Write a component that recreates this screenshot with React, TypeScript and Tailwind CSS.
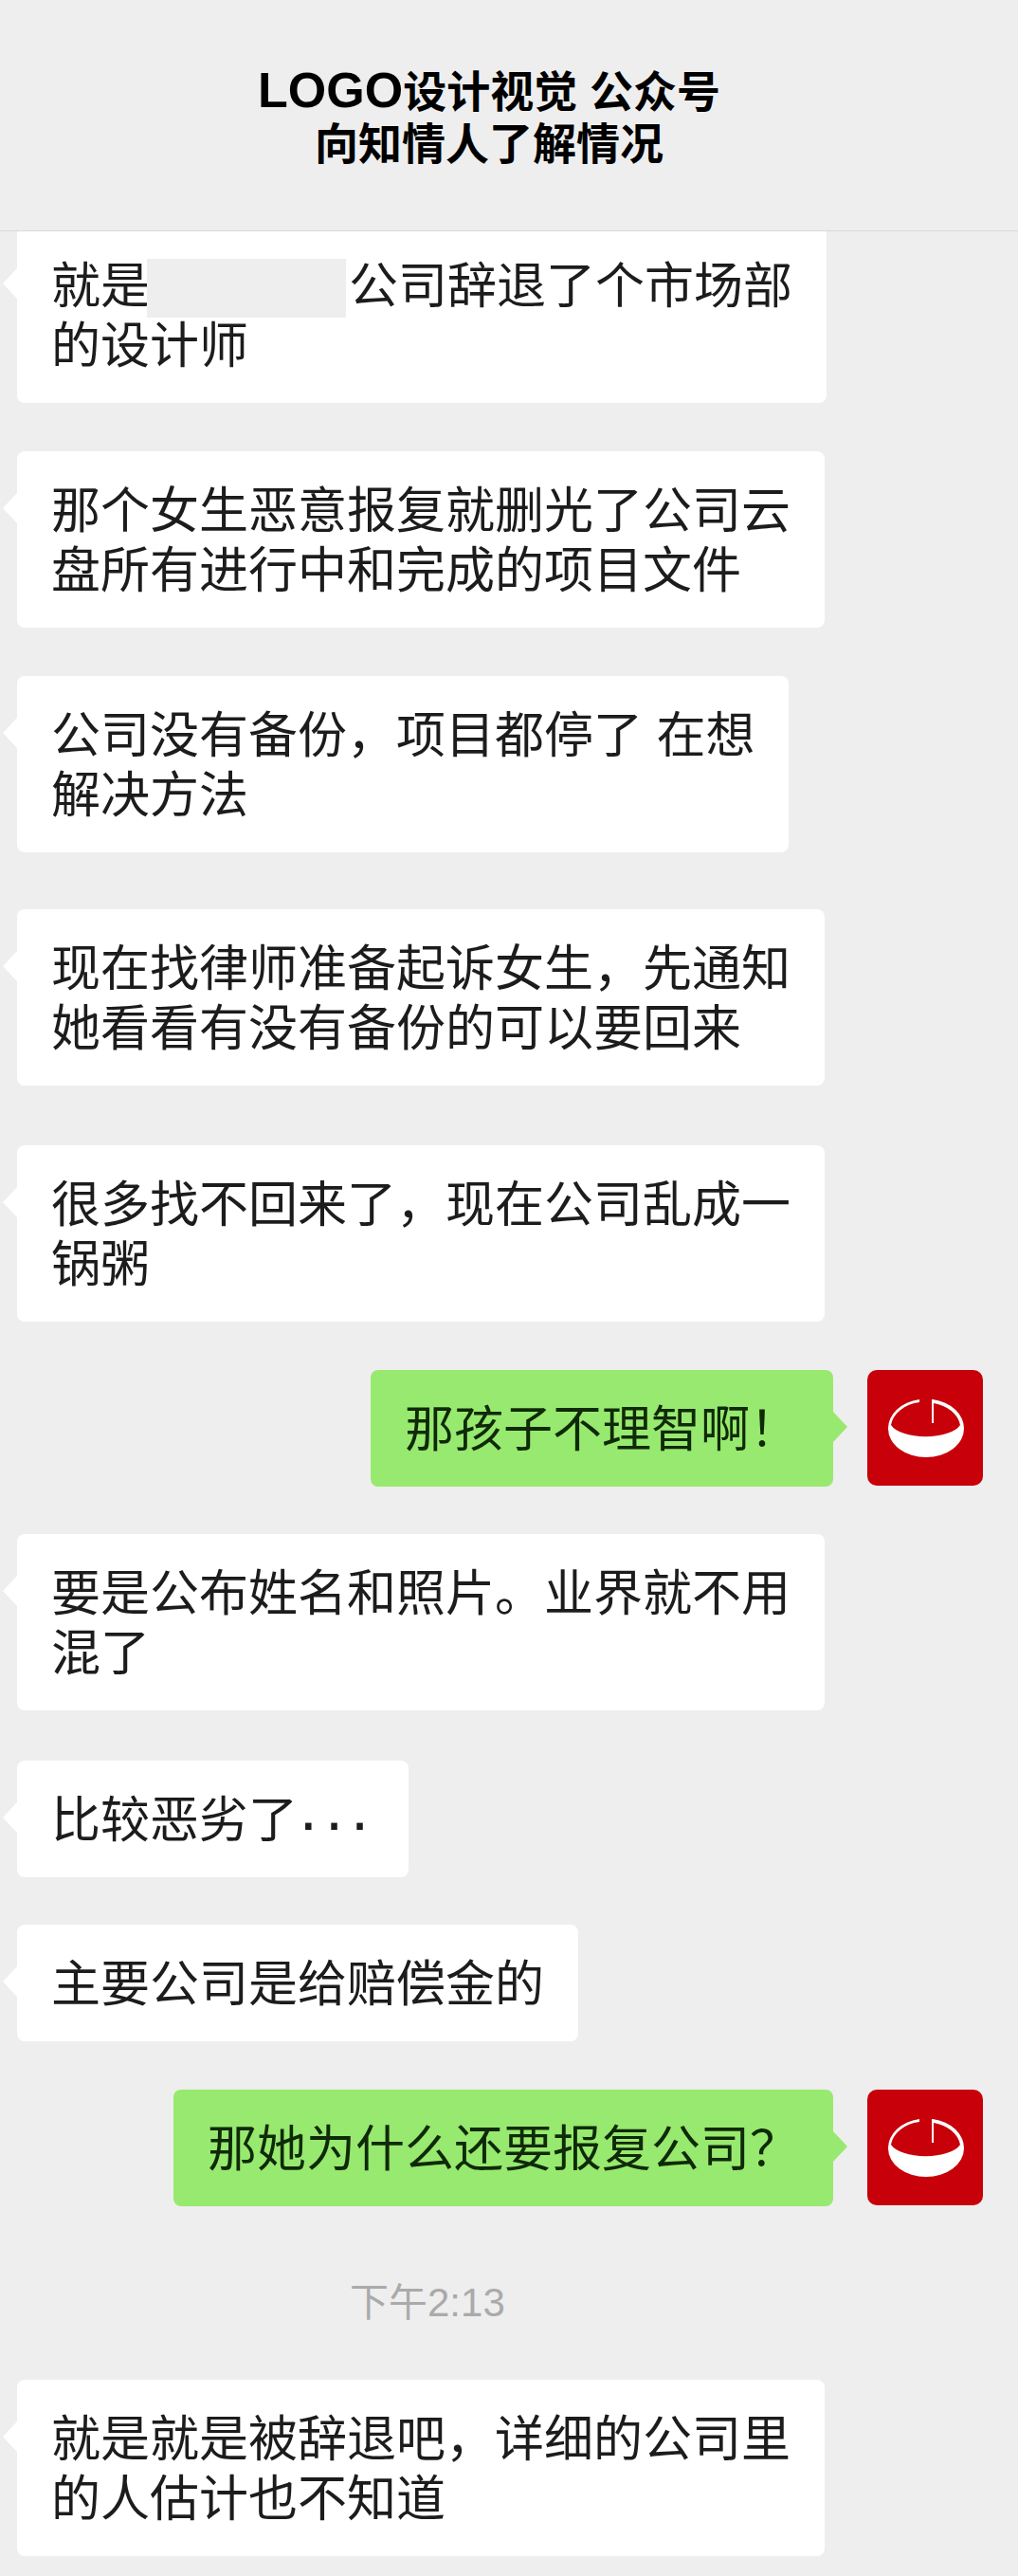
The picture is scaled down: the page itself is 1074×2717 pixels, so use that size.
const cjk = "font-['Liberation_Sans','Noto_Sans_CJK_SC',sans-serif]"

type Row = {
  side: "left" | "right"
  gap: string
  lines: React.ReactNode[]
}

const rows: Row[] = [
  {
    side: "left",
    gap: "mt-0",
    lines: [
      <>
        就是
        <span className="inline-block align-middle -mt-[6px] -mb-[2px] -ml-[3px] mr-[3px] w-[210px] h-[62px] bg-[#eeeeee]" />
        公司辞退了个市场部
      </>,
      "的设计师",
    ],
  },
  { side: "left", gap: "mt-[51px]", lines: ["那个女生恶意报复就删光了公司云", "盘所有进行中和完成的项目文件"] },
  { side: "left", gap: "mt-[51px]", lines: ["公司没有备份，项目都停了 在想", "解决方法"] },
  { side: "left", gap: "mt-[60px]", lines: ["现在找律师准备起诉女生，先通知", "她看看有没有备份的可以要回来"] },
  { side: "left", gap: "mt-[63px]", lines: ["很多找不回来了，现在公司乱成一", "锅粥"] },
  { side: "right", gap: "mt-[51px]", lines: ["那孩子不理智啊！"] },
  { side: "left", gap: "mt-[50px]", lines: ["要是公布姓名和照片。业界就不用", "混了"] },
  {
    side: "left",
    gap: "mt-[53px]",
    lines: [
      <>
        比较恶劣了
        <span className="text-[68px] leading-[0] tracking-[4.5px] align-[-7px]">···</span>
      </>,
    ],
  },
  { side: "left", gap: "mt-[50px]", lines: ["主要公司是给赔偿金的"] },
  { side: "right", gap: "mt-[51px]", lines: ["那她为什么还要报复公司？"] },
]

function Avatar() {
  return (
    <div className="w-[122px] h-[122px] shrink-0 rounded-[10px] bg-[#c70009] flex items-center justify-center">
      <svg width="122" height="122" viewBox="0 0 122 122">
        <path
          d="M55 31A40 31 0 0 0 22 62A40 30 0 0 0 102 62A40 31 0 0 0 69 31L68 31L68 56L70 56L70 35A36 28 0 0 1 98 58A38 17 0 0 1 25 58A36 28 0 0 1 55 34Z"
          fill="#ffffff"
        />
      </svg>
    </div>
  )
}

function Bubble({ row }: { row: Row }) {
  const mine = row.side === "right"
  return (
    <div className={`relative w-fit px-9 pt-[32px] pb-[28px] rounded-[8px] text-[52px] leading-[63px] whitespace-nowrap ${mine ? "bg-[#98e96f] text-[#0f2a08]" : "bg-white text-[#1c1c1c]"}`}>
      {mine ? (
        <span className="absolute right-[-15px] top-[44px] w-0 h-0 border-y-[16px] border-y-transparent border-l-[15px] border-l-[#98e96f]" />
      ) : (
        <span className="absolute left-[-15px] top-[44px] w-0 h-0 border-y-[16px] border-y-transparent border-r-[15px] border-r-white" />
      )}
      {row.lines.map((line, i) => (
        <div key={i}>{line}</div>
      ))}
    </div>
  )
}

export default function App() {
  return (
    <div className={`w-[1074px] h-[2717px] overflow-hidden bg-[#eeeeee] ${cjk}`}>
      {/* Header sits above the list, the first bubble scrolls under it */}
      <div className="relative z-10 h-[244px] pt-[68px] pr-[42px] bg-[#eeeeee] border-b border-[#d9d9d9] text-center text-[46px] leading-[55px] font-bold text-black">
        <div>
          <span className="text-[52px]">LOGO</span>设计视觉 公众号
        </div>
        <div>向知情人了解情况</div>
      </div>

      {/* Messages */}
      <div className="pl-[18px] pr-[37px]">
        <div className="-mt-[5px]">
          {rows.map((row, i) =>
            row.side === "right" ? (
              <div key={i} className={`flex justify-end gap-[36px] ${row.gap}`}>
                <Bubble row={row} />
                <Avatar />
              </div>
            ) : (
              <div key={i} className={row.gap}>
                <Bubble row={row} />
              </div>
            ),
          )}
        </div>

        <div className="mt-[74px] pl-[351px] text-[41px] leading-[56px] text-[#aaaaaa]">
          下午<span className="text-[42px]">2:13</span>
        </div>

        <div className="mt-[53px]">
          <Bubble
            row={{
              side: "left",
              gap: "mt-0",
              lines: ["就是就是被辞退吧，详细的公司里", "的人估计也不知道"],
            }}
          />
        </div>
      </div>
    </div>
  )
}
